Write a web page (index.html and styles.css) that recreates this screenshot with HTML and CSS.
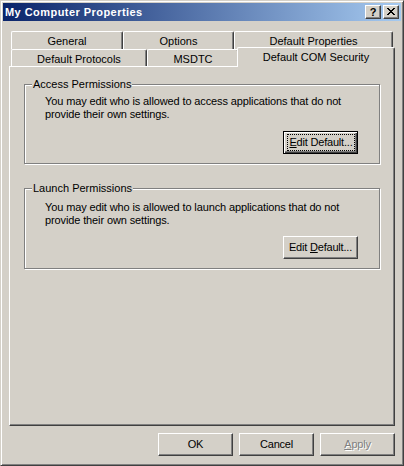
FILE: index.html
```html
<!DOCTYPE html>
<html>
<head>
<meta charset="utf-8">
<title>My Computer Properties</title>
<link rel="stylesheet" href="styles.css">
</head>
<body>
<div class="window">
  <div class="titlebar">
    <span class="title">My Computer Properties</span>
    <div class="tbtns">
      <span class="tbtn help">?</span>
      <span class="tbtn close"><svg width="8" height="7" viewBox="0 0 8 7" shape-rendering="crispEdges"><path fill="#000" d="M0 0h2v1h-2z M6 0h2v1h-2z M1 1h2v1h-2z M5 1h2v1h-2z M2 2h4v1h-4z M3 3h2v1h-2z M2 4h4v1h-4z M1 5h2v1h-2z M5 5h2v1h-2z M0 6h2v1h-2z M6 6h2v1h-2z"/></svg></span>
    </div>
  </div>
  <div class="tabstrip">
    <div class="tabrow row1">
      <div class="tab t-general">General</div>
      <div class="tab t-options">Options</div>
      <div class="tab t-defprops">Default Properties</div>
    </div>
    <div class="tabrow row2">
      <div class="tab t-protocols">Default Protocols</div>
      <div class="tab t-msdtc">MSDTC</div>
      <div class="tab t-com selected">Default COM Security</div>
    </div>
  </div>
  <div class="panel">
    <div class="group">
      <div class="legend">Access Permissions</div>
      <p class="desc">You may edit who is allowed to access applications that do not<br>provide their own settings.</p>
      <div class="grow"><button class="btn default"><span class="focus"><u>E</u>dit Default...</span></button></div>
    </div>
    <div class="group second">
      <div class="legend">Launch Permissions</div>
      <p class="desc">You may edit who is allowed to launch applications that do not<br>provide their own settings.</p>
      <div class="grow"><button class="btn"><span class="lbl">Edit <u>D</u>efault...</span></button></div>
    </div>
  </div>
  <div class="footer">
    <button class="btn"><span class="lbl">OK</span></button>
    <button class="btn"><span class="lbl">Cancel</span></button>
    <button class="btn disabled"><span class="lbl"><u>A</u>pply</span></button>
  </div>
</div>
</body>
</html>
```
FILE: styles.css
```css
html, body {
  margin: 0;
  padding: 0;
  background: #d4d0c8;
}
body {
  font-family: "Liberation Sans", Arial, sans-serif;
  font-size: 11px;
  color: #000;
}
.window {
  width: 404px;
  height: 466px;
  box-sizing: border-box;
  border: 1px solid;
  border-color: #d4d0c8 #404040 #404040 #d4d0c8;
  box-shadow: inset 1px 1px #fff, inset -1px -1px #808080;
  padding: 2px;
  background: #d4d0c8;
  display: flex;
  flex-direction: column;
}
.titlebar {
  height: 18px;
  flex: none;
  background: linear-gradient(to right, #0a246a, #a6caf0);
  display: flex;
  align-items: center;
  justify-content: space-between;
  padding: 0 2px;
}
.title {
  color: #fff;
  font-weight: bold;
  font-size: 11px;
  letter-spacing: 0.45px;
  line-height: 14px;
}
.tbtns {
  display: flex;
  gap: 2px;
}
.tbtn {
  width: 16px;
  height: 14px;
  box-sizing: border-box;
  background: #d4d0c8;
  border: 1px solid;
  border-color: #fff #404040 #404040 #fff;
  box-shadow: inset -1px -1px #808080;
  display: flex;
  align-items: center;
  justify-content: center;
}
.help {
  font-weight: bold;
  font-size: 11px;
  line-height: 12px;
  padding-bottom: 1px;
}
.close svg {
  display: block;
  margin-bottom: 1px;
}
.tabstrip {
  height: 45px;
  flex: none;
  padding-left: 8px;
}
.tabrow {
  display: flex;
  align-items: flex-end;
}
.row1 {
  margin-top: 10px;
  height: 18px;
}
.row2 {
  height: 17px;
}
.tab {
  box-sizing: border-box;
  height: 100%;
  border-top: 1px solid #fff;
  border-left: 1px solid #fff;
  border-right: 1px solid #404040;
  border-radius: 2px 2px 0 0;
  box-shadow: inset -1px 0 #808080;
  text-align: center;
  padding-top: 2px;
  line-height: 14px;
  white-space: nowrap;
  background: #d4d0c8;
}
.t-general { width: 112px; }
.t-options { width: 111px; }
.t-defprops { width: 159px; }
.t-protocols { width: 136px; }
.t-msdtc { width: 92px; }
.t-com { width: 154px; }
.tab.selected {
  position: relative;
  z-index: 2;
  width: 158px;
  height: 20px;
  margin-left: -2px;
  margin-bottom: -1px;
  padding-top: 2px;
}
.panel {
  position: relative;
  z-index: 1;
  margin: 0 6px;
  height: 360px;
  flex: none;
  box-sizing: border-box;
  border: 1px solid;
  border-color: #fff #404040 #404040 #fff;
  box-shadow: inset -1px -1px #808080;
  padding: 17px 0 0 14px;
}
.group {
  width: 356px;
  height: 80px;
  box-sizing: border-box;
  border: 1px solid #808080;
  box-shadow: inset 1px 1px #fff, 1px 1px #fff;
}
.group.second {
  margin-top: 24px;
  height: 81px;
}
.legend {
  display: block;
  width: max-content;
  margin: -7px 0 0 7px;
  padding: 0 1px;
  background: #d4d0c8;
  line-height: 13px;
}
.desc {
  margin: 4px 0 0 20px;
  line-height: 13px;
  white-space: nowrap;
  letter-spacing: -0.12px;
}
.second .desc {
  margin-top: 6px;
}
.grow {
  display: flex;
  justify-content: flex-end;
  margin-top: 10px;
  padding-right: 21px;
}
.second .grow {
  margin-top: 9px;
}
.btn {
  width: 75px;
  height: 23px;
  box-sizing: border-box;
  font: inherit;
  color: #000;
  background: #d4d0c8;
  border: 1px solid;
  border-color: #fff #404040 #404040 #fff;
  box-shadow: inset -1px -1px #808080;
  padding: 0;
  margin: 0;
  display: flex;
  align-items: center;
  justify-content: center;
  white-space: nowrap;
}
.btn .lbl {
  line-height: 15px;
  letter-spacing: -0.2px;
}
.btn.default {
  border-color: #000;
  box-shadow: inset 1px 1px #fff, inset -1px -1px #404040, inset -2px -2px #808080;
  align-items: stretch;
  justify-content: stretch;
}
.focus {
  flex: 1;
  margin: 2px 2px 2px 3px;
  border: 1px dotted #000;
  line-height: 15px;
  text-align: center;
  white-space: nowrap;
  letter-spacing: -0.2px;
}
.footer {
  margin-top: 7px;
  padding-right: 6px;
  display: flex;
  justify-content: flex-end;
  gap: 6px;
}
.btn.disabled {
  color: #808080;
  text-shadow: 1px 1px #fff;
}
```
